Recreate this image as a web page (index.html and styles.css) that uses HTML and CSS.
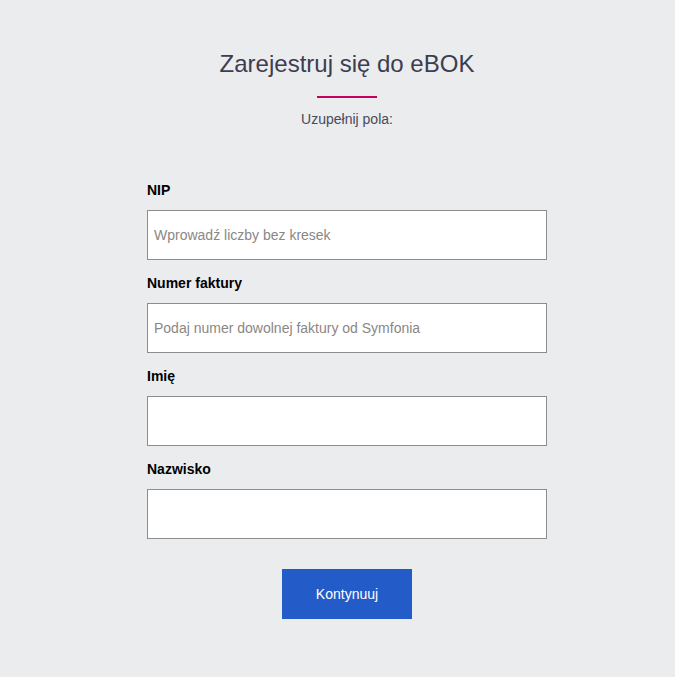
FILE: index.html
```html
<!DOCTYPE html>
<html lang="pl">
<head>
<meta charset="utf-8">
<title>Zarejestruj się do eBOK</title>
<link rel="stylesheet" href="styles.css">
</head>
<body>
<main class="page">
  <h1 class="title">Zarejestruj się do eBOK</h1>
  <div class="divider"></div>
  <p class="subtitle">Uzupełnij pola:</p>
  <form class="form">
    <div class="field">
      <label class="label" for="nip">NIP</label>
      <input class="input" id="nip" type="text" placeholder="Wprowadź liczby bez kresek">
    </div>
    <div class="field">
      <label class="label" for="faktura">Numer faktury</label>
      <input class="input" id="faktura" type="text" placeholder="Podaj numer dowolnej faktury od Symfonia">
    </div>
    <div class="field">
      <label class="label" for="imie">Imię</label>
      <input class="input" id="imie" type="text">
    </div>
    <div class="field">
      <label class="label" for="nazwisko">Nazwisko</label>
      <input class="input" id="nazwisko" type="text">
    </div>
    <button class="button" type="button">Kontynuuj</button>
  </form>
</main>
</body>
</html>
```
FILE: styles.css
```css
html, body {
  margin: 0;
  padding: 0;
  background: #ebecee;
  font-family: "Liberation Sans", Arial, sans-serif;
}
.page {
  box-sizing: border-box;
  width: 675px;
  min-height: 677px;
  padding: 50px 0 0 19px;
  display: flex;
  flex-direction: column;
  align-items: center;
}
.title {
  margin: 0;
  font-size: 24px;
  line-height: 28px;
  font-weight: normal;
  color: #3d3d4f;
}
.divider {
  margin-top: 18px;
  width: 60px;
  height: 2px;
  background: #c5005f;
}
.subtitle {
  margin: 13px 0 0;
  font-size: 14px;
  line-height: 16px;
  color: #4a4a5a;
}
.form {
  margin-top: 55px;
  width: 400px;
  display: flex;
  flex-direction: column;
  gap: 15px;
}
.field {
  display: flex;
  flex-direction: column;
}
.label {
  font-size: 14px;
  line-height: 16px;
  font-weight: bold;
  color: #000;
  margin-bottom: 12px;
}
.input {
  box-sizing: border-box;
  width: 400px;
  height: 50px;
  margin: 0;
  padding: 0 6px;
  border: 1px solid #8d8d8d;
  border-radius: 0;
  background: #fff;
  font-family: "Liberation Sans", Arial, sans-serif;
  font-size: 14px;
  color: #333;
  outline: none;
}
.input::placeholder {
  color: #8a8785;
  opacity: 1;
}
.button {
  align-self: center;
  margin-top: 15px;
  width: 130px;
  height: 50px;
  border: none;
  border-radius: 0;
  background: #235bc8;
  color: #fff;
  font-family: "Liberation Sans", Arial, sans-serif;
  font-size: 14px;
  cursor: pointer;
}
```
